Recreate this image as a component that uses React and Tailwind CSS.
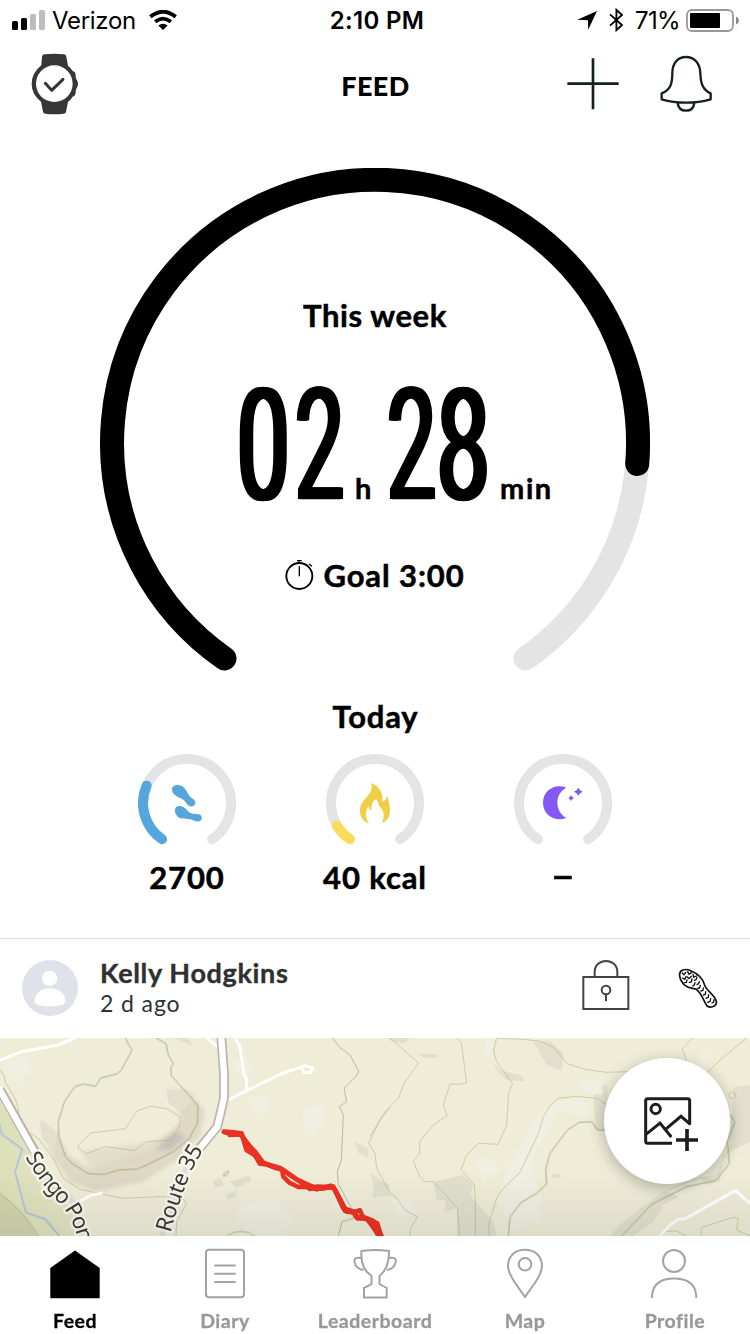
import React from 'react';

const WatchIcon = () => (
  <svg className="w-[50px] h-16" viewBox="90 156 150 192">
    <path fill="#363636" d="M126 170q1-7 8-7q29-3 57 0q7 0 8 7l5 27q10 8 14 16q9 2 9 14q-1 7 3 12q4 4 4 12q0 9-4 13q-3 5-3 12q0 12-9 14q-5 9-14 15l-6 31q-1 5-7 5q-28 3-55 0q-6 0-7-6l-6-30q-28-22-28-53q0-33 29-56z" />
    <circle cx="163" cy="251" r="55" fill="#fff" />
    <path d="M136 250l19 21l34-33" fill="none" stroke="#363636" strokeWidth="9" strokeLinecap="round" strokeLinejoin="round" />
  </svg>
);

const PlusIcon = () => (
  <svg className="size-[52px]" viewBox="81 174 156 156">
    <path d="M159 175v153M82 251h154" stroke="#12211f" strokeWidth="8" />
  </svg>
);

const BellIcon = () => (
  <svg className="w-[54px] h-[60px]" viewBox="357 162 162 180" fill="none" stroke="#12211f" strokeWidth="7">
    <path strokeLinejoin="round" d="M438 171C412 171 397 191 397 219C397 252 391 270 365 280V298Q399 308 438 308Q477 308 512 298V280C488 270 482 250 481 219C480 191 464 171 438 171Z" />
    <path d="M413 309Q416 332 438 332Q460 332 463 309" />
  </svg>
);

const Ring = ({ progress, color, children }) => (
  <div className="grid size-[98px] place-items-center">
    <svg className="[grid-area:1/1] size-[98px]" viewBox="0 0 98 98" fill="none" strokeWidth="10" strokeLinecap="round">
      <path d="M24 85.2A44 44 0 1 1 74 85.2" stroke="#e4e4e4" />
      {progress && <path d={progress} stroke={color} />}
    </svg>
    <div className="[grid-area:1/1]">{children}</div>
  </div>
);

const StepsIcon = () => (
  <svg className="size-[98px]" viewBox="54 41 294 294" fill="#54a6dd">
    <path d="M156 148C155 132 180 130 192 142C203 153 204 165 214 172C231 182 228 195 217 198C203 200 200 187 191 179C180 170 157 167 156 148Z" />
    <path d="M166 203C174 192 192 199 200 208C208 218 215 220 229 221C246 221 248 232 243 240C234 248 222 240 209 237C193 233 181 238 172 228C165 221 163 210 166 203Z" />
  </svg>
);

const FlameIcon = () => (
  <svg className="size-[98px]" viewBox="618 41 294 294" fill="#f0cf47">
    <path d="M754 128C777 138 791 158 787 184C796 181 801 174 802 164C805 183 810 192 810 210C810 231 800 244 786 248C793 231 794 216 783 204C775 195 774 186 770 177C758 180 755 190 754 211C749 208 746 203 745 198C736 213 735 232 747 249C730 244 720 231 720 211C720 173 762 169 754 128Z" />
  </svg>
);

const MoonIcon = () => (
  <svg className="size-[98px]" viewBox="42 41 294 294" fill="#8459f3">
    <path d="M199 142C163 160 163 213 199 233C163 246 129 223 129 187C129 151 164 128 199 142Z" />
    <path d="M235 142q3 8 13 12q-10 4-13 12q-3-8-13-12q10-4 13-12zM213 165q3 6 9 8q-6 3-9 9q-3-6-8-9q5-2 8-8z" />
  </svg>
);

const LockIcon = () => (
  <svg className="-mt-[7px] w-12 h-[50px]" viewBox="65 60 144 150" fill="none" stroke="#444" strokeWidth="6">
    <path d="M69 111H204V207H69ZM103 111V96C103 52 171 52 171 96V111" />
    <circle cx="137" cy="150" r="13" />
    <path d="M137 163V184" />
  </svg>
);

const ShoeIcon = () => (
  <svg className="w-10 h-10" viewBox="354 83 120 120" fill="none" stroke="#111" strokeLinecap="round">
    <path strokeWidth="5" d="M359 106C356 88 377 84 392 91C414 100 428 114 433 132C437 150 464 163 469 183C472 199 446 207 438 192C428 175 425 160 409 147C398 143 387 145 375 135C367 128 360 117 359 106Z" />
    <path strokeWidth="4" d="M367 98l5 5l5-7M383 94l4 8l7-5M368 113l6 4l4-8M382 110l5 5l7-7M399 102l2 8l8-3M374 127l5-1l2-7M388 126l6-1l2-9M403 120l5-2l3-7M398 137l5-3l2-7M411 132l4-1l3-7M413 145l6-3l2-7M423 152l6-2l1-7M430 164l6-2l1-8M438 174l7-3l1-8M443 186l7-3l2-8M456 188l5-3l1-7" />
  </svg>
);

const AddPhotoIcon = () => (
  <svg className="w-14 h-14" viewBox="819 186 168 168" fill="none" stroke="#1d1d1d" strokeWidth="9">
    <path d="M906 328H833Q827 328 827 322V200Q827 194 833 194H953Q959 194 959 200V272M828 301L870 267L904 309M889 284L933 247L961 271" />
    <circle cx="857" cy="225" r="14" />
    <path strokeWidth="11" d="M951 285V351M918 318H984" />
  </svg>
);

const TrailMap = () => (
  <svg className="[grid-area:1/1] block h-[198px] w-[750px]" viewBox="0 9 2250 594" fill="none" strokeLinejoin="round">
    <defs>
      <linearGradient id="fade" x1="0" y1="0" x2="0" y2="1">
        <stop offset="0" stopColor="#000" stopOpacity="0" />
        <stop offset="1" stopColor="#000" stopOpacity="0.07" />
      </linearGradient>
      <linearGradient id="pond" x1="0" y1="0" x2="1" y2="0">
        <stop offset="0" stopColor="#dce0b9" />
        <stop offset="1" stopColor="#e5e6c6" />
      </linearGradient>
      <filter id="soft"><feGaussianBlur stdDeviation="7" /></filter>
      <path id="songo" d="M76 366C108 424 142 466 176 502S222 566 246 650" />
      <path id="route" d="M512 594C522 554 536 508 554 460S584 386 622 326" />
    </defs>
    <rect y="9" width="2250" height="594" fill="#efedd8" />

    {/* terrain shading */}
    <path d="M0 200L100 350L180 480L280 603H0Z" fill="url(#pond)" />
    <path d="M0 475Q60 510 118 603H0Z" fill="#cfcfaa" opacity=".7" />
    <g filter="url(#soft)" fill="#d9d3bf">
      <path d="M120 255L175 300L205 360L265 400L360 375L450 350L500 300L545 255L530 200L500 165L570 170L615 230L600 300L540 370L430 440L290 470L210 440L160 370Z" opacity=".8" />
      <path d="M240 350L340 335L430 325L520 300L500 340L450 365L360 385L270 395Z" opacity=".6" />
      <path d="M470 345L500 305L535 290L555 310L510 345Z" fill="#c8c0ba" />
    </g>
    <g fill="#e2e0cd">
      <path d="M120 255L170 290L160 350L125 305ZM500 165L560 162L580 195L540 230L505 205ZM520 9H560L585 38L560 25ZM638 440L660 430L672 450L645 458ZM690 440L750 420L752 438L710 458ZM680 478L710 466L708 485L680 494ZM1062 318L1105 340V370L1075 355ZM1120 425L1170 450L1165 480L1118 488Z" />
      <path d="M1160 9H1230L1215 25L1180 20ZM1255 57H1313V68H1270ZM1475 78L1500 105L1560 120L1576 139L1520 136L1496 115ZM1600 20L1650 18L1690 55L1685 108L1640 90Z" />
      <path d="M1110 410L1160 455L1178 485L1130 480ZM1300 440L1390 420L1420 450L1410 480L1480 560L1490 603H1370L1372 520L1335 530L1336 495H1310ZM1655 418H1683V429H1660ZM1780 150H1822V290L1785 285Z" />
      <path d="M2200 155L2250 150V320L2170 360L2160 440L2080 460L1990 510L1960 560L1900 603H1830L1860 570L1920 520L1990 470L2080 430L2150 420L2190 330Z" />
    </g>
    <g fill="#f1efe1">
      <path d="M695 75L740 70L762 105L725 120L705 105ZM740 190L800 185L798 230L765 240ZM910 220L970 210L975 260L940 300L910 270ZM720 505L830 495L880 550L850 603H740L708 545ZM995 480L1050 470L1050 520L1010 540ZM10 85L75 60L95 95L60 145L20 120Z" />
      <path d="M1455 12H1480L1470 65L1452 55ZM1745 140L1808 135V180L1745 170ZM1535 380L1580 300L1630 225L1700 195L1760 200L1770 240L1680 230L1610 340L1590 400L1620 470L1625 560L1540 585L1490 500L1510 430ZM1430 375L1480 370L1500 410L1450 440ZM1170 490L1230 500L1250 540L1200 550ZM2100 60L2120 45L2118 110L2090 115ZM2000 470L2100 430L2130 460L2050 490Z" />
    </g>

    {/* stream */}
    <path d="M0 270L5 297L67 343L45 410L78 533L135 552L178 603" stroke="#b8c5d8" strokeWidth="6" />

    {/* contour lines */}
    <g stroke="#99a66d" strokeWidth="3" opacity=".85">
      <path d="M375 9L396 45L364 105L350 117L302 129L286 154L249 147L225 155L193 200L175 260L176 305L195 362L215 385L265 416L313 418L355 405L411 402L440 390L520 350L568 310L592 265L594 213L575 190L514 122L512 98L520 86L505 60L498 26L468 9" />
      <path d="M997 9L1020 38L1050 60L1076 108L1070 122L1032 160L1040 200L1018 215L1030 240L1024 375L1012 410L1015 447L1052 515L1060 550L1026 560L1015 603M680 603Q725 575 765 603" opacity=".8" />
      <path d="M1825 285H1792L1775 260L1738 262L1702 285L1650 355L1637 402L1640 447L1610 475L1562 503L1530 547L1525 603M2190 238L2204 262L2182 320L2188 385L2148 436L2060 455L1955 508L1865 603" />
      <path d="M670 423q4-16 16-14q-2 14-16 14z" />
    </g>
    <g stroke="#aab384" strokeWidth="3" opacity=".55">
      <path d="M235 330L272 294L376 281L411 228L455 213L502 222L540 246V270L515 315L437 321L403 347L315 335L260 356L235 340ZM0 105L12 120L15 140L45 190L55 220L60 290L85 290L115 310L160 370L190 430L240 463L320 480L370 490L480 485L545 488L560 505L530 560L528 603M0 475Q60 520 118 603" />
      <path d="M1170 218L1140 255L1106 325L1125 355L1130 400L1165 465L1190 490L1215 525L1252 545L1230 585V603M1170 9L1256 84L1212 145L1195 190L1155 230L1110 305M1370 9L1384 22L1400 144L1380 148L1350 147L1330 210L1341 242L1300 270L1258 320L1260 355L1240 380L1260 425L1275 440H1300L1372 520L1379 603M1490 10Q1550 10 1620 18L1665 40L1700 85L1755 103L1820 112L1885 110M1490 10L1481 45Q1485 80 1505 100L1538 145L1526 175L1520 270L1494 328L1435 325L1400 360L1383 403L1423 450L1426 490V603M1820 210L1790 190L1730 184L1675 190L1650 212L1630 245L1615 295L1560 412L1510 460L1490 490L1467 565V603M2078 9L2047 42L2060 80M2240 9L2160 75L2120 115M2104 603V578L2200 547L2215 550L2210 585L2250 603M1990 590L2030 588L2060 603" />
      <circle cx="2197" cy="181" r="10" />
    </g>

    {/* roads */}
    <g stroke="#fff" strokeWidth="9">
      <path d="M0 76L65 50L175 30L225 9M620 9L655 35M704 9L720 35L732 120L741 133L738 164M680 197L842 117L898 98L916 92L938 99L930 113H912L904 98M308 474L275 480L232 503M1980 603L2010 570L2036 553L2056 551L2206 467L2250 505" />
    </g>
    <path d="M0 165L105 350M664 9L672 115V190L652 275L590 350" stroke="#b9b4ae" strokeWidth="29" />
    <path d="M-5 157L107 357M664 9L672 115V190L652 275L586 356" stroke="#fff" strokeWidth="19" />
    <path d="M208 483L270 603M560 395L485 603" stroke="#dedde0" strokeWidth="16" />

    {/* road names */}
    <g fill="#3a3936" stroke="#f8f7ed" strokeWidth="14" className="font-['Noto_Sans','Open_Sans',sans-serif] text-[67px] [paint-order:stroke]">
      <text className="text-[66px]"><textPath href="#songo" textLength="308">Songo Pon</textPath></text>
      <text><textPath href="#route" textLength="270">Route 35</textPath></text>
    </g>

    {/* recorded track */}
    <g stroke="#e93223" strokeWidth="14" strokeLinecap="round">
      <path d="M672 291L690 296L722 296L740 325L765 350L790 384L825 398L845 402L878 425L900 440L930 462L950 455L1000 457L1018 490L1035 527L1062 532L1080 526L1088 545L1120 558L1148 610" />
      <path d="M672 290L700 292L725 295L735 330L740 346L764 360L780 386L800 388L822 396L846 404L850 425L868 443L895 456L925 455L950 463L992 452L1005 464L1040 530L1065 532L1072 550L1100 550L1122 580L1138 606" />
      <path d="M690 300L722 298L758 345L782 382L840 399L890 433L935 454L965 461L1000 455L1030 520L1062 530L1068 545L1110 555L1132 565L1144 606" />
    </g>
    <rect y="410" width="2250" height="193" fill="url(#fade)" />
  </svg>
);

// condensed numerals, each one squeezed to its own width
const Digit = ({ children, width, squeeze }) => (
  <span className={`inline-block ${width}`}>
    <span className={`inline-block origin-left font-['Roboto',sans-serif] text-[156px] font-normal [text-shadow:4px_0_#000,-4px_0_#000] ${squeeze}`}>{children}</span>
  </span>
);

const navItems = [
  {
    label: 'Feed',
    active: true,
    icon: <path d="M75 15.5L99.7 33V63.3H50.3V33Z" fill="#000" stroke="none" />,
  },
  {
    label: 'Diary',
    icon: (
      <>
        <rect x="56" y="14.7" width="38" height="47.5" rx="3" />
        <path d="M65 30.5H85M65 38.8H85M65 47H85" strokeLinecap="round" />
      </>
    ),
  },
  {
    label: 'Leaderboard',
    icon: (
      <>
        <path d="M61.5 15.9Q75 14 89 15.9Q89.5 33 79.5 41V49L86.7 53V62.5H64V53L71.5 49V41Q60 33 61.5 15.9Z" />
        <path d="M61.5 23Q53.5 21.5 54.5 27Q56 34 63.5 35M88.8 23Q96.5 21.5 95.7 27Q94 34 87 35" />
      </>
    ),
  },
  {
    label: 'Map',
    icon: (
      <>
        <path d="M75 62L64.5 47Q58 37 58 31C58 21 65 14.8 75 14.8S92 21 92 31Q92 37 85.5 47Z" />
        <circle cx="75" cy="29.3" r="6.3" />
      </>
    ),
  },
  {
    label: 'Profile',
    icon: (
      <>
        <circle cx="74" cy="26" r="11" />
        <path d="M52 63C52 48 61 43.5 74 43.5S96.3 48 96.3 63" />
      </>
    ),
  },
];

const App = () => {
  return (
    <div className="flex h-[1334px] w-[750px] flex-col overflow-hidden bg-white font-['Lato',sans-serif] text-black">

      {/* Status bar */}
      <div className="grid h-10 grid-cols-3 items-center font-['Inter',sans-serif] text-2xl leading-9">
        <div className="flex items-center pl-3">
          <svg className="h-5 w-[34px]" viewBox="0 0 34 20">
            <rect y="11" width="6" height="9" rx="1.5" />
            <rect x="9" y="8" width="6" height="12" rx="1.5" />
            <rect x="18" y="4" width="6" height="16" rx="1.5" fill="#bdbdbd" />
            <rect x="27" width="6" height="20" rx="1.5" fill="#bdbdbd" />
          </svg>
          <span className="ml-1.5 w-[84px] pt-0.5 tracking-[-0.3px]">Verizon</span>
          <svg className="ml-[13px] h-5 w-7" viewBox="0 0 28 20" fill="none" stroke="#000" strokeWidth="3.8">
            <path d="M1.3 6.8Q14-3.2 26.7 6.8M6.2 11.8Q14 5.4 21.8 11.8" />
            <path d="M14 20L9.3 15.5Q14 11.8 18.7 15.5Z" fill="#000" stroke="none" />
          </svg>
        </div>
        <div className="pt-0.5 pl-1 text-center font-semibold tracking-[0.3px]">2:10 PM</div>
        <div className="flex items-center justify-end pr-[11px]">
          <svg className="h-[19px] w-5" viewBox="0 0 20 19"><path d="M20 0L11.2 18.7L11 9.3L.3 8.7Z" /></svg>
          <svg className="ml-3 h-6 w-[15px]" viewBox="0 0 15 24" fill="none" stroke="#000" strokeWidth="1.8"><path d="M1 6.3L13 17L7.4 22.2V1.8L13 7L1 17.7" /></svg>
          <span className="ml-[11px] w-[47px] pt-0.5 tracking-[-0.7px]">71%</span>
          <svg className="ml-1 h-[23px] w-[53px]" viewBox="0 0 53 23">
            <rect x="1" y="1" width="46" height="21" rx="5" fill="none" stroke="#999" strokeWidth="1.8" />
            <rect x="4" y="4" width="30" height="15" rx="1" />
            <path d="M50 7.5Q53 9 53 11.5T50 15.5Z" fill="#888" />
          </svg>
        </div>
      </div>

      {/* Header */}
      <header className="flex h-[88px] items-center pr-[37px] pl-[30px]">
        <div className="w-[308px]"><WatchIcon /></div>
        <h1 className="w-[75px] pt-[5px] text-center text-[27px] font-black tracking-[0.4px]">FEED</h1>
        <div className="flex flex-1 items-center justify-end gap-10">
          <PlusIcon />
          <BellIcon />
        </div>
      </header>

      {/* Weekly goal */}
      <section className="mx-auto mt-10 grid h-[520px] w-[550px] shrink-0">
        <svg className="[grid-area:1/1] h-[520px] w-[550px]" viewBox="100 168 550 520" fill="none" strokeWidth="24" strokeLinecap="round">
          <path d="M224.5 658.5A263 263 0 1 1 525.5 658.5" stroke="#e4e4e4" />
          <path d="M224.5 658.5A263 263 0 1 1 637.2 464" stroke="#000" />
        </svg>
        <div className="[grid-area:1/1] pt-[127px] [-webkit-text-stroke:0.5px_#000]">
          <h2 className="text-center text-[31px] leading-10 font-bold tracking-[0.6px]">This week</h2>
          <div className="mt-[41px] flex h-[140px] items-baseline pl-[137px] text-[29px] leading-[140px] font-bold tracking-[1.6px]">
            <span className="flex w-[118px] items-baseline tracking-normal">
              <Digit width="w-[58px]" squeeze="scale-x-[.6]">0</Digit>
              <Digit width="w-[60px]" squeeze="scale-x-[.56]">2</Digit>
            </span>
            <span className="w-8">h</span>
            <span className="flex w-[113px] items-baseline tracking-normal">
              <Digit width="w-[50px]" squeeze="scale-x-[.56]">2</Digit>
              <Digit width="w-[63px]" squeeze="scale-x-[.6]">8</Digit>
            </span>
            <span>min</span>
          </div>
          <div className="mt-[39px] flex items-center justify-center gap-2 text-[31px] leading-10 font-bold tracking-[0.9px]">
            <svg className="h-8 w-[30px]" viewBox="193 568 90 96" fill="none" stroke="#000">
              <circle cx="236" cy="619" r="39" strokeWidth="5.5" />
              <path d="M236 590V620M229 573H243M236 573V581M265 583L274 590" strokeWidth="4" />
            </svg>
            <span>Goal 3:00</span>
          </div>
        </div>
      </section>

      {/* Today */}
      <section className="h-[250px] shrink-0 pt-2 [-webkit-text-stroke:0.5px_#000]">
        <h2 className="pl-px text-center text-[31px] leading-10 font-bold tracking-[0.8px]">Today</h2>
        <div className="mx-auto mt-[18px] grid w-[564px] grid-cols-3 text-[31px] leading-10 font-bold tracking-[0.9px]">
          <div className="flex flex-col items-center gap-[5px]">
            <Ring progress="M24 85.2A44 44 0 0 1 8.6 31.7" color="#54a6dd"><StepsIcon /></Ring>
            <span>2700</span>
          </div>
          <div className="flex flex-col items-center gap-[5px]">
            <Ring progress="M24 85.2A44 44 0 0 1 10.9 71.7" color="#f9dd5a"><FlameIcon /></Ring>
            <span>40 kcal</span>
          </div>
          <div className="flex flex-col items-center gap-[5px]">
            <Ring><MoonIcon /></Ring>
            <span className="-mt-0.5 scale-x-[1.35] font-black">–</span>
          </div>
        </div>
      </section>

      {/* Feed entry */}
      <article className="shrink-0">
        <div className="flex h-[100px] items-center border-t border-[#dcdee2] pr-[32px] pb-px pl-[22px]">
          <svg className="size-14" viewBox="66 90 168 168">
            <circle cx="150" cy="174" r="84" fill="#dfe2e8" />
            <circle cx="149" cy="145" r="23" fill="#fff" />
            <path d="M104 214C104 162 196 162 196 214Q196 229 150 229T104 214Z" fill="#fff" />
          </svg>
          <div className="ml-[22px] flex-1">
            <p className="text-[27px] leading-[30px] font-bold tracking-[0.65px] text-[#303030] [-webkit-text-stroke:0.4px_#303030]">Kelly Hodgkins</p>
            <p className="text-[23px] leading-[30px] tracking-[0.9px] text-[#2c3336]">2 d ago</p>
          </div>
          <LockIcon />
          <div className="ml-12"><ShoeIcon /></div>
        </div>
        <div className="grid h-[198px]">
          <TrailMap />
          <button className="[grid-area:1/1] z-10 mt-5 mr-5 grid size-[126px] place-items-center justify-self-end rounded-full bg-white pt-1.5 pl-2 shadow-[0_4px_16px_rgba(0,0,0,0.28)]">
            <AddPhotoIcon />
          </button>
        </div>
      </article>

      {/* Bottom navigation */}
      <nav className="grid h-[98px] shrink-0 grid-cols-5 bg-white">
        {navItems.map(({ label, icon, active }) => (
          <a key={label} className={`flex flex-col items-center text-[19.5px] leading-6 font-bold tracking-[0.5px] [-webkit-text-stroke:0.3px] ${active ? 'text-black' : 'text-[#989898]'}`}>
            <svg className="h-[66px] w-[150px]" viewBox="0 1 150 66" fill="none" stroke="#a3a3a3" strokeWidth="2">
              {icon}
            </svg>
            <span className="mt-[7px]">{label}</span>
          </a>
        ))}
      </nav>
    </div>
  );
};

export default App;
